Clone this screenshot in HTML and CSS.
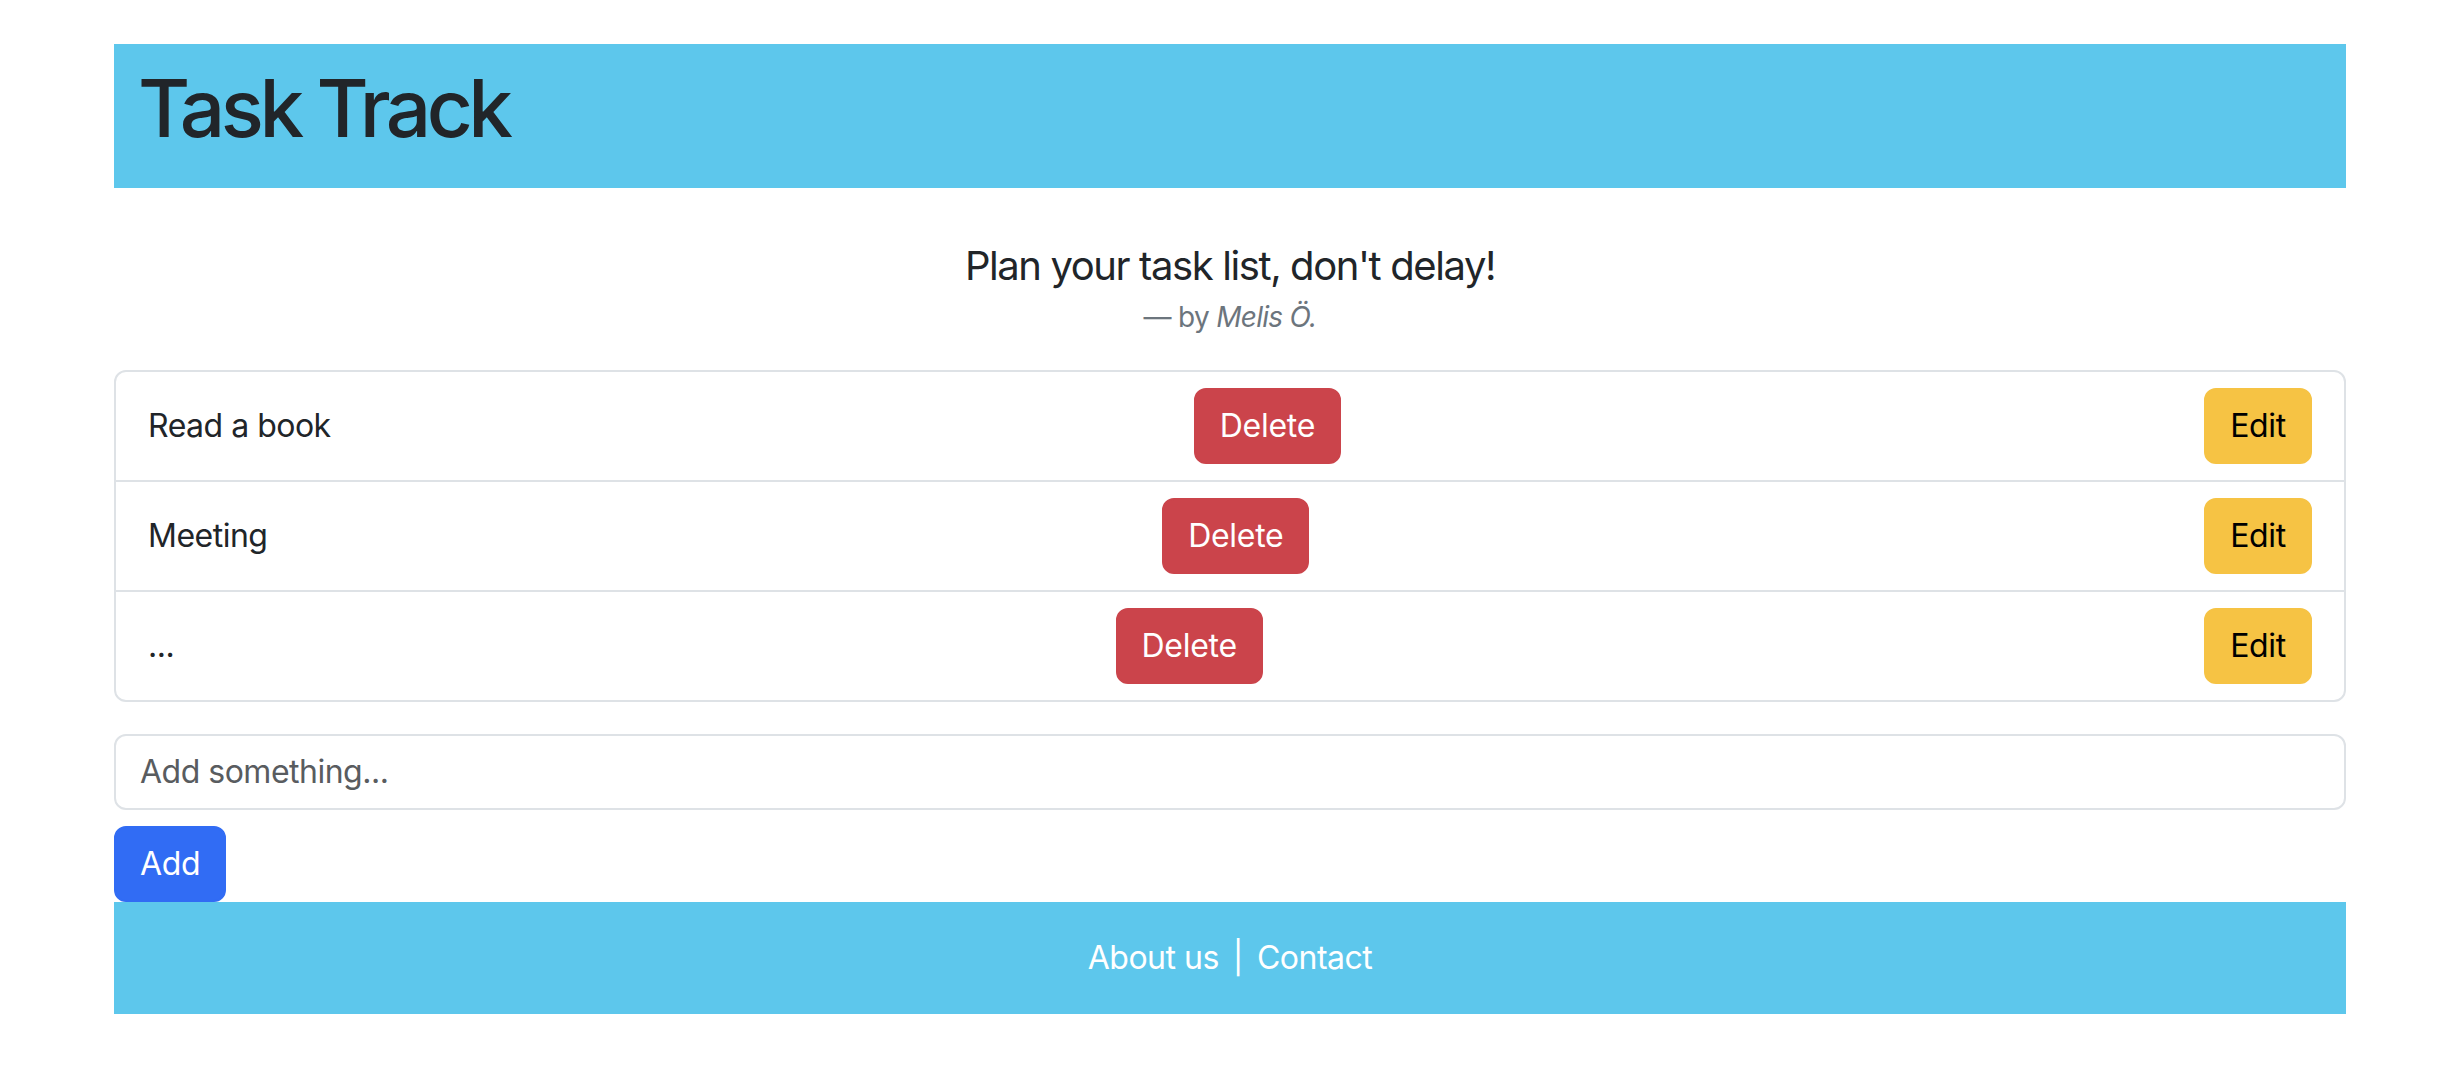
FILE: index.html
```html
<!DOCTYPE html>
<html lang="en">
<head>
<meta charset="utf-8">
<title>Task Track</title>
<link rel="stylesheet" href="styles.css">
</head>
<body>
<div class="page">
  <header class="masthead">
    <h1 class="title">Task Track</h1>
  </header>

  <figure class="quote">
    <blockquote class="quote-text"><p>Plan your task list, don't delay!</p></blockquote>
    <figcaption class="quote-author">— by <cite>Melis Ö.</cite></figcaption>
  </figure>

  <ul class="tasks">
    <li class="task"><span class="task-name">Read a book</span><button class="btn btn-delete" type="button">Delete</button><button class="btn btn-edit" type="button">Edit</button></li>
    <li class="task"><span class="task-name">Meeting</span><button class="btn btn-delete" type="button">Delete</button><button class="btn btn-edit" type="button">Edit</button></li>
    <li class="task"><span class="task-name">...</span><button class="btn btn-delete" type="button">Delete</button><button class="btn btn-edit" type="button">Edit</button></li>
  </ul>

  <form class="add-form">
    <input class="add-input" type="text" placeholder="Add something...">
    <button class="btn btn-add" type="button">Add</button>
  </form>

  <footer class="footer">
    <a class="footer-link" href="#">About us</a><span class="footer-sep">|</span><a class="footer-link" href="#">Contact</a>
  </footer>
</div>
</body>
</html>
```

FILE: styles.css
```css
* { box-sizing: border-box; }

html, body {
  margin: 0;
  padding: 0;
  background: #ffffff;
}

body {
  font-family: Inter, "Noto Sans", "Liberation Sans", sans-serif;
  font-size: 32px;
  line-height: 48px;
  letter-spacing: -0.5px;
  color: #212529;
}

.page {
  width: 2232px;
  margin: 44px auto 0;
}

.masthead {
  background: #5dc7ec;
  padding: 16px 24px;
}

.title {
  margin: 0 0 16px;
  font-size: 80px;
  line-height: 96px;
  font-weight: 500;
  letter-spacing: -4.5px;
  color: #212529;
}

.quote {
  margin: 48px 0 32px;
  text-align: center;
}

.quote-text {
  margin: 0;
  font-size: 40px;
  line-height: 60px;
  letter-spacing: -1.4px;
}

.quote-text p { margin: 0; }

.quote-author {
  font-size: 28px;
  line-height: 42px;
  letter-spacing: -0.7px;
  color: #6c757d;
}

.quote-author cite { font-style: italic; }

.tasks {
  list-style: none;
  margin: 0;
  padding: 0;
  border: 2px solid #dee2e6;
  border-radius: 12px;
}

.task {
  display: flex;
  justify-content: space-between;
  align-items: center;
  padding: 16px 32px;
}

.task + .task { border-top: 2px solid #dee2e6; }

.task-name { color: #212529; }

.btn {
  font-family: inherit;
  font-size: 32px;
  line-height: 48px;
  letter-spacing: -0.3px;
  padding: 12px 24px;
  border: 2px solid transparent;
  border-radius: 12px;
  cursor: pointer;
}

.btn-delete {
  background: #cb444b;
  border-color: #cb444b;
  color: #ffffff;
}

.btn-edit {
  background: #f6c344;
  border-color: #f6c344;
  color: #000000;
}

.btn-add {
  background: #316cf4;
  border-color: #316cf4;
  color: #ffffff;
}

.add-form {
  margin: 32px 0 0;
  display: flex;
  flex-direction: column;
  align-items: flex-start;
  gap: 16px;
}

.add-input {
  width: 100%;
  font-family: inherit;
  font-size: 32px;
  line-height: 48px;
  letter-spacing: -0.5px;
  padding: 12px 24px;
  border: 2px solid #dee2e6;
  border-radius: 12px;
  color: #212529;
  background: #ffffff;
}

.add-input::placeholder { color: #595c5f; opacity: 1; }

.footer {
  background: #5dc7ec;
  padding: 32px 0;
  text-align: center;
  color: #ffffff;
}

.footer-link {
  color: #ffffff;
  text-decoration: none;
}

.footer-sep {
  margin: 0 14px;
}
```
